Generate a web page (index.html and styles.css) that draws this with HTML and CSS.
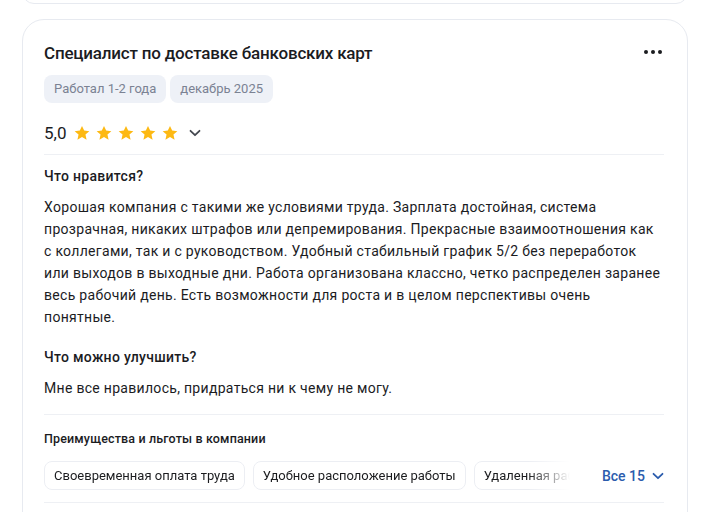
FILE: index.html
```html
<!DOCTYPE html>
<html lang="ru">
<head>
<meta charset="utf-8">
<link rel="stylesheet" href="styles.css">
</head>
<body>
<div class="page">
  <div class="prev-card"></div>
  <article class="card">
    <header class="card-head">
      <h2 class="title">Специалист по доставке банковских карт</h2>
      <button class="more" aria-label="Ещё">
        <svg width="18" height="4" viewBox="0 0 18 4"><circle cx="2" cy="2" r="2"/><circle cx="9" cy="2" r="2"/><circle cx="16" cy="2" r="2"/></svg>
      </button>
    </header>
    <div class="tags">
      <span class="tag">Работал 1-2 года</span>
      <span class="tag">декабрь 2025</span>
    </div>
    <div class="rating">
      <span class="score">5,0</span>
      <span class="stars">
        <svg viewBox="0 0 24 24"><path d="M12 2.5l2.9 6.3 6.9.7-5.2 4.6 1.5 6.8L12 17.4l-6.1 3.5 1.5-6.8-5.2-4.6 6.9-.7z"/></svg>
        <svg viewBox="0 0 24 24"><path d="M12 2.5l2.9 6.3 6.9.7-5.2 4.6 1.5 6.8L12 17.4l-6.1 3.5 1.5-6.8-5.2-4.6 6.9-.7z"/></svg>
        <svg viewBox="0 0 24 24"><path d="M12 2.5l2.9 6.3 6.9.7-5.2 4.6 1.5 6.8L12 17.4l-6.1 3.5 1.5-6.8-5.2-4.6 6.9-.7z"/></svg>
        <svg viewBox="0 0 24 24"><path d="M12 2.5l2.9 6.3 6.9.7-5.2 4.6 1.5 6.8L12 17.4l-6.1 3.5 1.5-6.8-5.2-4.6 6.9-.7z"/></svg>
        <svg viewBox="0 0 24 24"><path d="M12 2.5l2.9 6.3 6.9.7-5.2 4.6 1.5 6.8L12 17.4l-6.1 3.5 1.5-6.8-5.2-4.6 6.9-.7z"/></svg>
      </span>
      <svg class="chev" width="12" height="8" viewBox="0 0 12 8"><path d="M1.5 1.8L6 6.2l4.5-4.4" fill="none" stroke="currentColor" stroke-width="1.8" stroke-linecap="round" stroke-linejoin="round"/></svg>
    </div>
    <section class="block">
      <h3 class="block-title">Что нравится?</h3>
      <p class="block-text">Хорошая компания с такими же условиями труда. Зарплата достойная, система прозрачная, никаких штрафов или депремирования. Прекрасные взаимоотношения как с коллегами, так и с руководством. Удобный стабильный график 5/2 без переработок или выходов в выходные дни. Работа организована классно, четко распределен заранее весь рабочий день. Есть возможности для роста и в целом перспективы очень понятные.</p>
    </section>
    <section class="block block-last">
      <h3 class="block-title">Что можно улучшить?</h3>
      <p class="block-text">Мне все нравилось, придраться ни к чему не могу.</p>
    </section>
    <section class="perks">
      <h4 class="perks-title">Преимущества и льготы в компании</h4>
      <div class="perks-row">
        <div class="perks-list">
          <span class="perk">Своевременная оплата труда</span>
          <span class="perk">Удобное расположение работы</span>
          <span class="perk">Удаленная работа</span>
        </div>
        <a class="all">Все 15
          <svg width="12" height="8" viewBox="0 0 12 8"><path d="M1.5 1.8L6 6.2l4.5-4.4" fill="none" stroke="currentColor" stroke-width="1.8" stroke-linecap="round" stroke-linejoin="round"/></svg>
        </a>
      </div>
    </section>
  </article>
</div>
</body>
</html>
```

FILE: styles.css
```css
* { box-sizing: border-box; }
html, body { margin: 0; padding: 0; background: #fff; }
body {
  font-family: Roboto, "Noto Sans", "Liberation Sans", sans-serif;
  color: #1b1c1f;
}
.page {
  width: 666px;
  margin-left: 22px;
}
.prev-card {
  height: 24px;
  margin-top: -20px;
  border: 1px solid #e7eaf0;
  border-radius: 20px;
}
.card {
  margin-top: 15px;
  border: 1px solid #e7eaf0;
  border-radius: 22px;
  padding: 21px 23px 0 21px;
  height: 520px;
}
.card-head {
  display: flex;
  justify-content: space-between;
  align-items: flex-start;
}
.title {
  margin: 0;
  font-size: 17px;
  font-weight: 500;
  line-height: 24px;
  letter-spacing: -0.2px;
}
.more {
  border: 0;
  background: none;
  padding: 0;
  margin: 9px 2px 0 0;
  height: 4px;
  line-height: 0;
  fill: #1b1c1f;
}
.tags {
  display: flex;
  gap: 4px;
  margin-top: 10px;
}
.tag {
  height: 28px;
  padding: 0 10px;
  border-radius: 8px;
  background: #eef1f7;
  color: #7b8293;
  font-size: 13px;
  line-height: 28px;
}
.rating {
  display: flex;
  align-items: center;
  height: 24px;
  margin-top: 18px;
  padding-bottom: 9px;
  box-sizing: content-box;
  border-bottom: 1px solid #eef0f4;
}
.score {
  font-size: 17px;
  font-weight: 400;
  line-height: 24px;
}
.stars {
  display: flex;
  gap: 4px;
  margin-left: 7px;
}
.stars svg {
  width: 18px;
  height: 18px;
  fill: #fdb913;
}
.chev {
  margin-left: 10px;
  color: #444850;
}
.block { margin-top: 11px; }
.block + .block { margin-top: 19px; }
.block-title {
  margin: 0;
  font-size: 14px;
  font-weight: 500;
  line-height: 20px;
  letter-spacing: 0.3px;
}
.block-text {
  margin: 10px 0 0;
  font-size: 14px;
  line-height: 22px;
  letter-spacing: 0.3px;
}
.block-last {
  padding-bottom: 15px;
  border-bottom: 1px solid #eef0f4;
}
.perks { padding-top: 15px; }
.perks-title {
  margin: 0;
  font-size: 12.5px;
  font-weight: 500;
  line-height: 18px;
  letter-spacing: 0.15px;
}
.perks-row {
  display: flex;
  align-items: center;
  margin-top: 13px;
  padding-bottom: 12px;
  border-bottom: 1px solid #eef0f4;
}
.perks-list {
  display: flex;
  gap: 8px;
  width: 526px;
  overflow: hidden;
  -webkit-mask-image: linear-gradient(to right, #000 484px, transparent 526px);
  mask-image: linear-gradient(to right, #000 484px, transparent 526px);
}
.perk {
  flex: none;
  height: 29px;
  padding: 0 9px;
  border: 1px solid #eceef3;
  border-radius: 8px;
  font-size: 13px;
  line-height: 27px;
  color: #1b1c1f;
}
.all {
  margin-left: 32px;
  display: flex;
  align-items: center;
  gap: 7px;
  color: #2b5cad;
  font-size: 14px;
  font-weight: 500;
}
```
